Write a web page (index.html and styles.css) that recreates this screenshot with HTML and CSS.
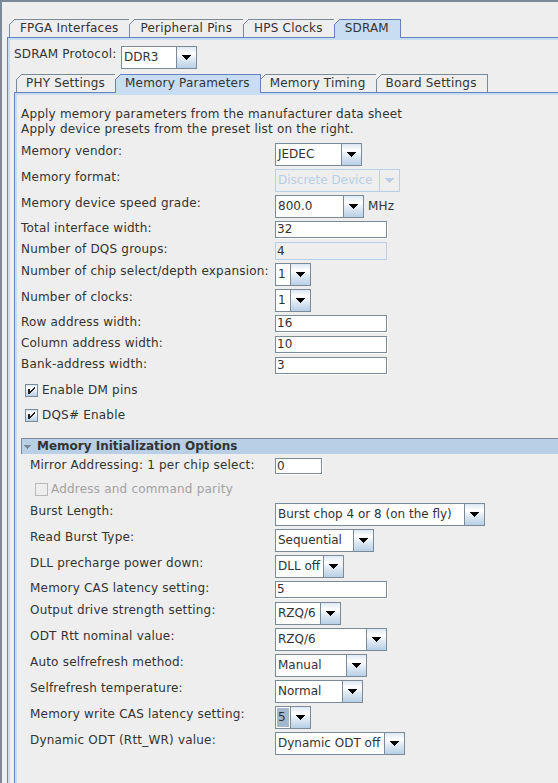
FILE: index.html
```html
<!DOCTYPE html>
<html>
<head>
<meta charset="utf-8">
<link rel="stylesheet" href="styles.css">
</head>
<body>
<div class="window">
  <div class="tabrow outer-tabs">
    <div class="tab">FPGA Interfaces</div>
    <div class="tab">Peripheral Pins</div>
    <div class="tab">HPS Clocks</div>
    <div class="tab selected">SDRAM</div>
  </div>
  <div class="tabpanel outer-panel">
    <div class="panel-body outer-body">
      <div class="protocol-row">
        <span class="protocol-label">SDRAM Protocol:</span>
        <div class="combo w-ddr3"><span class="combo-value">DDR3</span><span class="combo-btn"><svg class="arrow" width="9" height="5" viewBox="0 0 9 5"><path d="M0 0H9V1H8V2H7V3H6V4H5V5H4V4H3V3H2V2H1V1H0Z"/></svg></span></div>
      </div>
      <div class="tabrow inner-tabs">
        <div class="tab">PHY Settings</div>
        <div class="tab selected">Memory Parameters</div>
        <div class="tab">Memory Timing</div>
        <div class="tab">Board Settings</div>
      </div>
      <div class="tabpanel inner-panel">
        <div class="panel-body content">
          <p class="desc">Apply memory parameters from the manufacturer data sheet<br>Apply device presets from the preset list on the right.</p>
          <div class="form">
            <div class="row"><span class="label">Memory vendor:</span>
              <div class="combo w-86"><span class="combo-value">JEDEC</span><span class="combo-btn"><svg class="arrow" width="9" height="5" viewBox="0 0 9 5"><path d="M0 0H9V1H8V2H7V3H6V4H5V5H4V4H3V3H2V2H1V1H0Z"/></svg></span></div></div>
            <div class="row"><span class="label">Memory format:</span>
              <div class="combo w-124 disabled"><span class="combo-value">Discrete Device</span><span class="combo-btn"><svg class="arrow" width="9" height="5" viewBox="0 0 9 5"><path d="M0 0H9V1H8V2H7V3H6V4H5V5H4V4H3V3H2V2H1V1H0Z"/></svg></span></div></div>
            <div class="row"><span class="label">Memory device speed grade:</span>
              <div class="combo w-88"><span class="combo-value">800.0</span><span class="combo-btn"><svg class="arrow" width="9" height="5" viewBox="0 0 9 5"><path d="M0 0H9V1H8V2H7V3H6V4H5V5H4V4H3V3H2V2H1V1H0Z"/></svg></span></div>
              <span class="unit">MHz</span></div>
            <div class="row f"><span class="label">Total interface width:</span><div class="field w-113">32</div></div>
            <div class="row f"><span class="label">Number of DQS groups:</span><div class="field w-113 disabled">4</div></div>
            <div class="row"><span class="label">Number of chip select/depth expansion:</span>
              <div class="combo w-36"><span class="combo-value">1</span><span class="combo-btn"><svg class="arrow" width="9" height="5" viewBox="0 0 9 5"><path d="M0 0H9V1H8V2H7V3H6V4H5V5H4V4H3V3H2V2H1V1H0Z"/></svg></span></div></div>
            <div class="row"><span class="label">Number of clocks:</span>
              <div class="combo w-36"><span class="combo-value">1</span><span class="combo-btn"><svg class="arrow" width="9" height="5" viewBox="0 0 9 5"><path d="M0 0H9V1H8V2H7V3H6V4H5V5H4V4H3V3H2V2H1V1H0Z"/></svg></span></div></div>
            <div class="row f"><span class="label">Row address width:</span><div class="field w-113">16</div></div>
            <div class="row f"><span class="label">Column address width:</span><div class="field w-113">10</div></div>
            <div class="row f"><span class="label">Bank-address width:</span><div class="field w-113">3</div></div>
          </div>
          <div class="checks">
            <div class="check"><span class="box"><svg width="11" height="11" viewBox="0 0 11 11"><path d="M2 4h2v5h-2z M8 2h1v2h-1z M7 3h1v2h-1z M6 4h1v2h-1z M5 5h1v2h-1z M4 6h1v2h-1z"/></svg></span><span>Enable DM pins</span></div>
            <div class="check"><span class="box"><svg width="11" height="11" viewBox="0 0 11 11"><path d="M2 4h2v5h-2z M8 2h1v2h-1z M7 3h1v2h-1z M6 4h1v2h-1z M5 5h1v2h-1z M4 6h1v2h-1z"/></svg></span><span>DQS# Enable</span></div>
          </div>
          <div class="section">
            <div class="section-header"><svg class="twisty" width="7" height="4" viewBox="0 0 7 4"><path d="M0 0H7V1H6V2H5V3H4V4H3V3H2V2H1V1H0Z"/></svg><span>Memory Initialization Options</span></div>
            <div class="section-body">
              <div class="row m"><span class="label">Mirror Addressing: 1 per chip select:</span><div class="field w-47">0</div></div>
              <div class="check disabled"><span class="box"></span><span>Address and command parity</span></div>
              <div class="row"><span class="label">Burst Length:</span>
                <div class="combo w-209"><span class="combo-value">Burst chop 4 or 8 (on the fly)</span><span class="combo-btn"><svg class="arrow" width="9" height="5" viewBox="0 0 9 5"><path d="M0 0H9V1H8V2H7V3H6V4H5V5H4V4H3V3H2V2H1V1H0Z"/></svg></span></div></div>
              <div class="row"><span class="label">Read Burst Type:</span>
                <div class="combo w-98"><span class="combo-value">Sequential</span><span class="combo-btn"><svg class="arrow" width="9" height="5" viewBox="0 0 9 5"><path d="M0 0H9V1H8V2H7V3H6V4H5V5H4V4H3V3H2V2H1V1H0Z"/></svg></span></div></div>
              <div class="row"><span class="label">DLL precharge power down:</span>
                <div class="combo w-68"><span class="combo-value">DLL off</span><span class="combo-btn"><svg class="arrow" width="9" height="5" viewBox="0 0 9 5"><path d="M0 0H9V1H8V2H7V3H6V4H5V5H4V4H3V3H2V2H1V1H0Z"/></svg></span></div></div>
              <div class="row f"><span class="label">Memory CAS latency setting:</span><div class="field w-113">5</div></div>
              <div class="row"><span class="label">Output drive strength setting:</span>
                <div class="combo w-65"><span class="combo-value">RZQ/6</span><span class="combo-btn"><svg class="arrow" width="9" height="5" viewBox="0 0 9 5"><path d="M0 0H9V1H8V2H7V3H6V4H5V5H4V4H3V3H2V2H1V1H0Z"/></svg></span></div></div>
              <div class="row"><span class="label">ODT Rtt nominal value:</span>
                <div class="combo w-111"><span class="combo-value">RZQ/6</span><span class="combo-btn"><svg class="arrow" width="9" height="5" viewBox="0 0 9 5"><path d="M0 0H9V1H8V2H7V3H6V4H5V5H4V4H3V3H2V2H1V1H0Z"/></svg></span></div></div>
              <div class="row"><span class="label">Auto selfrefresh method:</span>
                <div class="combo w-91"><span class="combo-value">Manual</span><span class="combo-btn"><svg class="arrow" width="9" height="5" viewBox="0 0 9 5"><path d="M0 0H9V1H8V2H7V3H6V4H5V5H4V4H3V3H2V2H1V1H0Z"/></svg></span></div></div>
              <div class="row"><span class="label">Selfrefresh temperature:</span>
                <div class="combo w-87"><span class="combo-value">Normal</span><span class="combo-btn"><svg class="arrow" width="9" height="5" viewBox="0 0 9 5"><path d="M0 0H9V1H8V2H7V3H6V4H5V5H4V4H3V3H2V2H1V1H0Z"/></svg></span></div></div>
              <div class="row"><span class="label">Memory write CAS latency setting:</span>
                <div class="combo w-36"><span class="combo-value sel">5</span><span class="combo-btn"><svg class="arrow" width="9" height="5" viewBox="0 0 9 5"><path d="M0 0H9V1H8V2H7V3H6V4H5V5H4V4H3V3H2V2H1V1H0Z"/></svg></span></div></div>
              <div class="row"><span class="label">Dynamic ODT (Rtt_WR) value:</span>
                <div class="combo w-129"><span class="combo-value">Dynamic ODT off</span><span class="combo-btn"><svg class="arrow" width="9" height="5" viewBox="0 0 9 5"><path d="M0 0H9V1H8V2H7V3H6V4H5V5H4V4H3V3H2V2H1V1H0Z"/></svg></span></div></div>
            </div>
          </div>
        </div>
      </div>
    </div>
  </div>
</div>
</body>
</html>
```
FILE: styles.css
```css
html, body {
  margin: 0;
  padding: 0;
  height: 100%;
}
body {
  background: #eeeeee;
  font-family: "DejaVu Sans", "Noto Sans", sans-serif;
  font-size: 12px;
  letter-spacing: 0.2px;
  color: #333333;
  overflow: hidden;
}
.window {
  width: 640px;
  height: 781px;
  border-top: 2px solid #7a8a99;
  border-left: 2px solid #7a8a99;
  display: flex;
  flex-direction: column;
}

/* ---- tabs ---- */
.tabrow {
  display: flex;
  align-items: flex-end;
  flex: none;
}
.outer-tabs {
  margin-top: 17px;
  padding-left: 7px;
}
.inner-tabs {
  margin-top: 5px;
  padding-left: 2px;
}
.tab {
  --line: #7a8a99;
  --fill: #eeeeee;
  height: 18px;
  box-sizing: border-box;
  padding: 1px 11px 0 11px;
  line-height: 17px;
  white-space: nowrap;
  border-right: 1px solid var(--line);
  background:
    linear-gradient(to bottom right, #eeeeee 0 calc(50% - 0.6px), var(--line) calc(50% - 0.6px) calc(50% + 0.6px), transparent calc(50% + 0.6px)) 0 0 / 6px 6px no-repeat,
    linear-gradient(var(--line), var(--line)) 6px 0 / 100% 1px no-repeat,
    linear-gradient(var(--line), var(--line)) 0 6px / 1px 100% no-repeat,
    var(--fill);
}
.inner-tabs .tab {
  padding-left: 10px;
  padding-right: 10px;
}
.tab + .tab {
  margin-left: -1px;
}
.tab.selected {
  --line: #6382bf;
  --fill: #c8ddf2;
  height: 19px;
  padding-bottom: 1px;
  margin-bottom: -1px;
  position: relative;
  z-index: 1;
}

.tabpanel {
  border-top: 1px solid #6382bf;
  border-left: 1px solid #6382bf;
  padding: 2px 0 0 2px;
  background: #c8ddf2;
  display: flex;
  flex-direction: column;
  flex: 1;
}
.outer-panel {
  margin-left: 5px;
}
.panel-body {
  background: #eeeeee;
  flex: 1;
  display: flex;
  flex-direction: column;
}
.outer-body {
  padding-left: 4px;
}

/* ---- protocol row ---- */
.protocol-row {
  display: flex;
  align-items: flex-start;
  margin-top: 6px;
  flex: none;
}
.protocol-label {
  width: 107px;
  line-height: 15px;
  padding-top: 1px;
  white-space: nowrap;
}

/* ---- content ---- */
.content {
  padding: 12px 0 0 4px;
}
.desc {
  margin: 0;
  line-height: 15px;
  white-space: nowrap;
}
.form {
  margin-top: 6px;
  display: flex;
  flex-direction: column;
  gap: 3px;
}
.row {
  display: flex;
  align-items: center;
  height: 23px;
}
.row.f {
  height: 18px;
}
.row.m {
  height: 17px;
}
.label {
  width: 254px;
  flex: none;
  align-self: flex-start;
  line-height: 15px;
  padding-top: 1px;
  white-space: nowrap;
}
.row.f .label,
.row.m .label {
  padding-top: 0;
}
.unit {
  margin-left: 4px;
  line-height: 15px;
}

/* ---- combo ---- */
.combo {
  display: flex;
  height: 23px;
  box-sizing: border-box;
  border: 1px solid #7a8a99;
  background: #ffffff;
  flex: none;
  letter-spacing: 0;
}
.combo-value {
  flex: 1;
  display: flex;
  align-items: center;
  padding-left: 2px;
  line-height: 15px;
  white-space: nowrap;
  overflow: hidden;
}
.combo-value.sel {
  background: #a3b8cc;
  margin: 1px;
  padding-left: 1px;
}
.combo-btn {
  width: 19px;
  flex: none;
  border-left: 1px solid #7a8a99;
  background: linear-gradient(#dde8f3 0%, #ffffff 30%, #dde8f3 60%, #b8cfe5 100%);
  display: flex;
  align-items: center;
  justify-content: center;
}
.arrow {
  display: block;
  fill: #000000;
}
.combo.disabled {
  border-color: #b8cfe5;
  background: #eeeeee;
  color: #b8cfe5;
}
.combo.disabled .combo-btn {
  border-left-color: #b8cfe5;
  background: #eeeeee;
}
.combo.disabled .arrow {
  fill: #b8cfe5;
}
.w-ddr3 { width: 76px; }
.w-36 { width: 36px; }
.w-65 { width: 66px; }
.w-68 { width: 69px; }
.w-86 { width: 87px; }
.w-87 { width: 88px; }
.w-88 { width: 89px; }
.w-91 { width: 92px; }
.w-98 { width: 99px; }
.w-111 { width: 112px; }
.w-124 { width: 125px; }
.w-129 { width: 130px; }
.w-209 { width: 210px; }

/* ---- text field ---- */
.field {
  height: 17px;
  box-sizing: border-box;
  border: 1px solid #7a8a99;
  background: #ffffff;
  box-shadow: 1px 1px 0 #ffffff;
  margin-bottom: 1px;
  padding-left: 1px;
  line-height: 15px;
  flex: none;
}
.row.m .field {
  height: 16px;
  line-height: 14px;
}
.field.w-113 { width: 112px; }
.field.w-47 { width: 47px; }
.field.disabled {
  border-color: #b8cfe5;
  background: #eeeeee;
  box-shadow: none;
  height: 18px;
  margin-bottom: 0;
  line-height: 16px;
}

/* ---- checkboxes ---- */
.checks {
  margin-top: 4px;
  display: flex;
  flex-direction: column;
  gap: 3px;
}
.check {
  height: 22px;
  display: flex;
  align-items: center;
  padding-left: 4px;
  gap: 4px;
  white-space: nowrap;
}
.box {
  width: 13px;
  height: 13px;
  box-sizing: border-box;
  border: 1px solid #7a8a99;
  background: linear-gradient(#dde8f3 0%, #ffffff 30%, #dde8f3 60%, #b8cfe5 100%);
  flex: none;
}
.box svg {
  display: block;
  fill: #222222;
}
.check.disabled {
  color: #a2a2a2;
  padding-left: 5px;
  gap: 3px;
}
.check.disabled .box {
  border-color: #b8b8b8;
  background: #eeeeee;
}

/* ---- section ---- */
.section {
  margin-top: 12px;
}
.section-header {
  height: 16px;
  box-sizing: border-box;
  border-top: 1px solid #7a8a99;
  border-left: 1px solid #7a8a99;
  background: #b8cfe5;
  display: flex;
  align-items: center;
  font-weight: bold;
  line-height: 15px;
  letter-spacing: 0;
  white-space: nowrap;
}
.twisty {
  display: block;
  fill: #7a8a99;
  margin-left: 2px;
  margin-right: 6px;
}
.section-body {
  padding-left: 9px;
  margin-top: 4px;
  display: flex;
  flex-direction: column;
  gap: 3px;
}
.section-body .label {
  width: 245px;
}
```
